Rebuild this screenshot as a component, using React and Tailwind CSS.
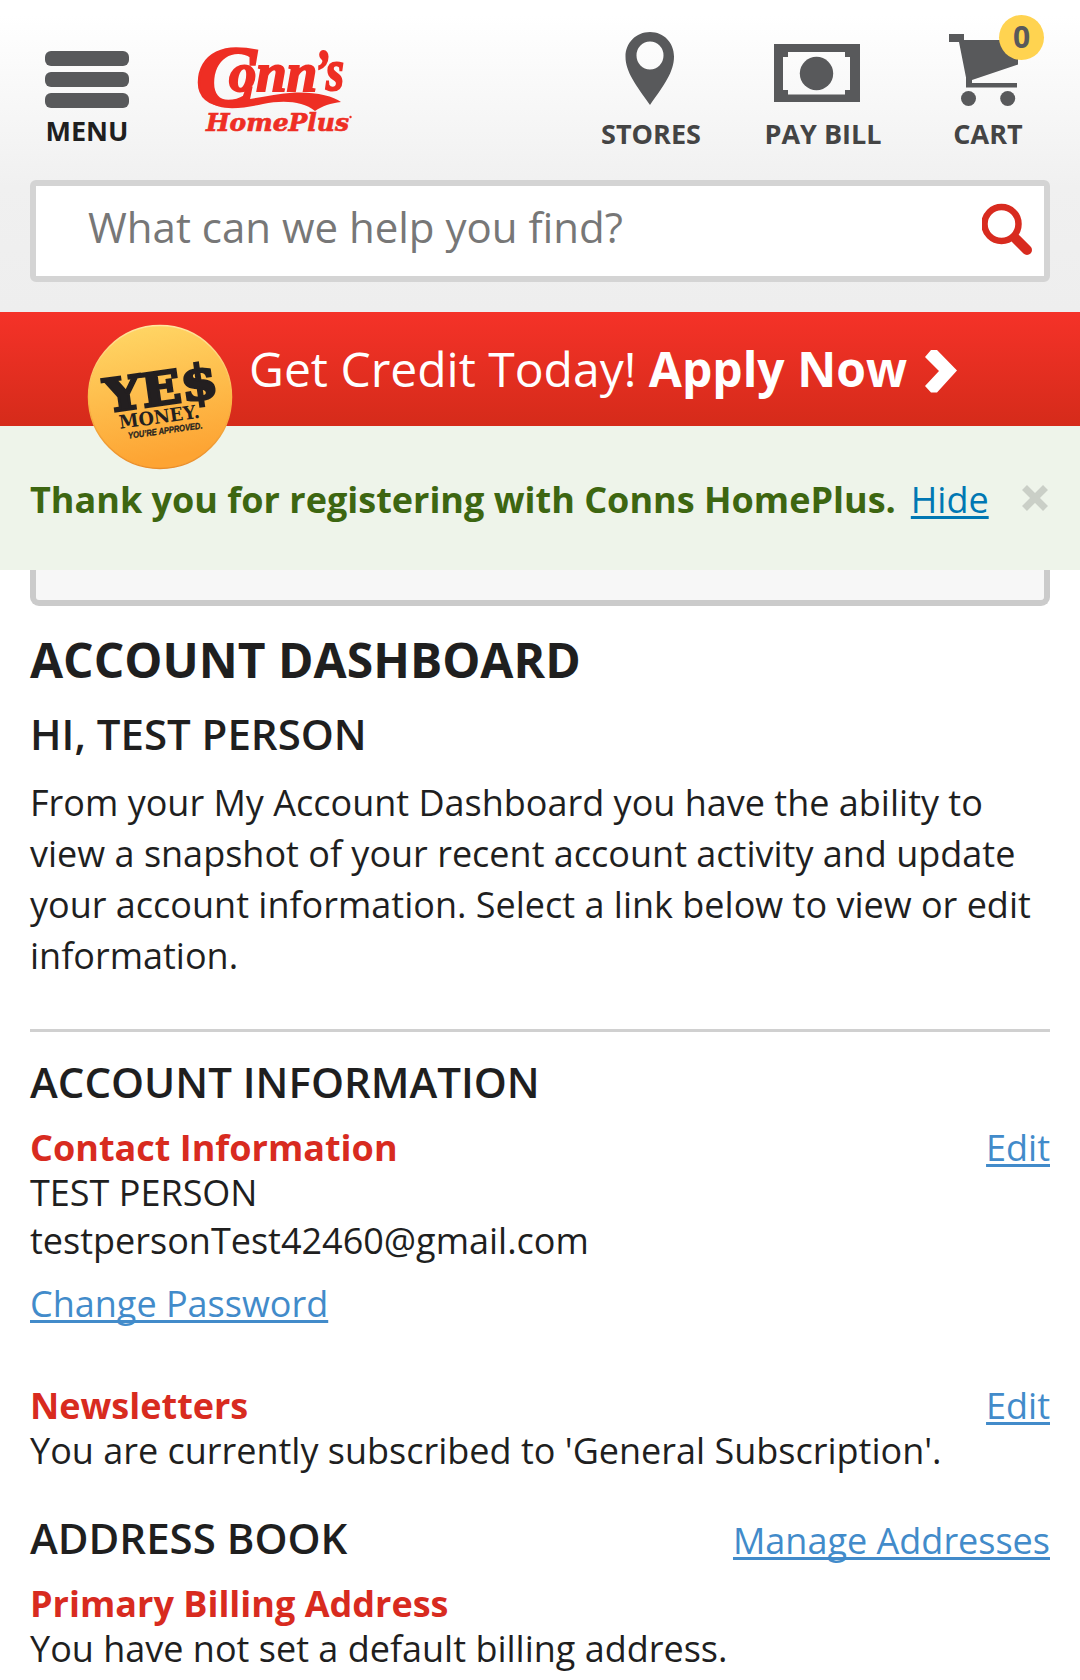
const Pin = () => (
  <svg className="block h-[74px] w-[50px]" viewBox="0 0 50 74" fill="#58595b">
    <path fillRule="evenodd" d="M25 0C11 0 .5 11 .5 24.500C.5 40 11 53 25 73C39 53 49 40 49 24.500C49 11 39 0 25 0ZM25 9.500A13.500 14 0 1 1 25 37.500A13.500 14 0 1 1 25 9.500Z" />
  </svg>
);

const Bill = () => (
  <svg className="block h-[58px] w-[86px]" viewBox="0 0 86 58" fill="#58595b">
    <path fillRule="evenodd" d="M0 0H86V58H0ZM14 8V13H9V46H14V50.500H71V46H76V13H71V8Z" />
    <circle cx="42.500" cy="29.500" r="16.700" />
  </svg>
);

const Cart = () => (
  <svg className="block h-[73px] w-[70px]" viewBox="0 0 70 73" fill="#58595b">
    <path fillRule="evenodd" d="M0 0H15V6H69V30.500L23 46V49H68V53.500H17V43.500L10 8H0Z" />
    <circle cx="19.500" cy="64.500" r="7.500" />
    <circle cx="58.700" cy="64.500" r="7.500" />
  </svg>
);

const Logo = () => (
  <svg className="block h-[90px] w-[160px] overflow-visible" viewBox="0 0 160 90" fill="#ee2e24">
    <g fontFamily="Liberation Serif" fontWeight="700" fontStyle="italic" stroke="#ee2e24">
      <text x="-1" y="60" fontSize="85" textLength="60" lengthAdjust="spacingAndGlyphs" strokeWidth="2.500">C</text>
      <text x="32" y="46" fontSize="54" textLength="88" lengthAdjust="spacingAndGlyphs" strokeWidth="2">onn</text>
      <text x="117" y="45" fontSize="60" textLength="30" lengthAdjust="spacingAndGlyphs" strokeWidth="2">’s</text>
    </g>
    <path d="M12 50C28 64 60 50 98 47.500C120 47 136 51 144 57C134 58 125 61 118 66C106 56 86 55 66 59C48 63 22 67 12 56Z" />
    <text x="9" y="85.500" fontFamily="DejaVu Serif" fontWeight="700" fontStyle="italic" fontSize="25" textLength="143" lengthAdjust="spacingAndGlyphs" stroke="#ee2e24" strokeWidth="0.700">HomePlus</text>
    <circle cx="153.500" cy="72" r="1.200" />
  </svg>
);

const YesMoney = () => (
  <svg className="absolute left-[87px] top-[12px] size-[146px]" viewBox="0 0 146 146">
    <defs>
      <linearGradient id="gold" x1="0" y1="0" x2="0.200" y2="1">
        <stop offset="0" stopColor="#ffd968" />
        <stop offset="1" stopColor="#fda433" />
      </linearGradient>
      <linearGradient id="rim" x1="0" y1="0" x2="0" y2="1">
        <stop offset="0" stopColor="#ffe6a0" />
        <stop offset="0.500" stopColor="#fbb947" />
        <stop offset="1" stopColor="#ea8d2a" />
      </linearGradient>
    </defs>
    <circle cx="73" cy="73" r="71.500" fill="url(#gold)" stroke="url(#rim)" strokeWidth="1.500" />
    <g fill="#231f20" fontWeight="700" transform="rotate(-8 73 73)">
      <text x="18" y="81" fontFamily="DejaVu Serif" fontSize="46" textLength="77" lengthAdjust="spacingAndGlyphs" stroke="#231f20" strokeWidth="2.500">YE</text>
      <text x="95" y="81" fontFamily="DejaVu Serif" fontSize="48" textLength="37" lengthAdjust="spacingAndGlyphs" stroke="#231f20" strokeWidth="2.500">$</text>
      <text x="29" y="99" fontFamily="DejaVu Serif" fontSize="18.500" textLength="81" lengthAdjust="spacingAndGlyphs">MONEY.</text>
      <text x="36" y="110" fontFamily="Liberation Sans" fontStyle="italic" fontSize="9" textLength="75" lengthAdjust="spacingAndGlyphs" stroke="#231f20" strokeWidth="0.300">YOU’RE APPROVED.</text>
    </g>
  </svg>
);

const Link = ({ children }) => (
  <a className="text-[#428bca] underline decoration-[3px] underline-offset-[3px] [text-decoration-skip-ink:none]">{children}</a>
);

export default function App() {
  return (
    <div className="h-[1680px] w-[1080px] overflow-hidden bg-white font-['Open_Sans',sans-serif] text-[36px] leading-[48px] text-[#1f1f1f]">
      <header className="h-[312px] bg-linear-to-b from-white from-5% via-[#f0f0f0] via-60% to-[#eeeeee] px-[30px]">
        <div className="flex h-[180px] text-[27px] leading-[30px] font-bold text-[#444]">
          <div className="flex w-[114px] flex-col items-center pt-[51px] text-[#1f1f1f]">
            <div className="flex flex-col gap-[6px]">
              <span className="h-[15px] w-[84px] rounded-[6px] bg-[#58595b]" />
              <span className="h-[15px] w-[84px] rounded-[6px] bg-[#58595b]" />
              <span className="h-[15px] w-[84px] rounded-[6px] bg-[#58595b]" />
            </div>
            <span className="mt-[8px]">MENU</span>
          </div>
          <div className="ml-[53px] pt-[45px]"><Logo /></div>
          <nav className="ml-auto flex">
            <div className="flex w-[120px] flex-col items-center pt-[32px]">
              <div className="-ml-[2px]"><Pin /></div>
              <span className="mt-[13px]">STORES</span>
            </div>
            <div className="ml-[44px] flex w-[136px] flex-col items-center pt-[44px]">
              <div className="-ml-3"><Bill /></div>
              <span className="mt-[17px]">PAY BILL</span>
            </div>
            <div className="relative mr-[2px] ml-[37px] flex w-[120px] flex-col items-center pt-[34px]">
              <div className="-ml-[8px]"><Cart /></div>
              <span className="mt-[12px]">CART</span>
              <span className="absolute left-[71px] top-[15px] flex size-[45px] items-center justify-center rounded-full bg-[#ffd350] pb-px text-[30px] text-[#58595b]">0</span>
            </div>
          </nav>
        </div>
        <div className="flex h-[102px] items-center justify-between rounded-[6px] border-[6px] border-[#d4d4d4] bg-white pl-[52px] pr-[11px]">
          <span className="-mt-2 text-[42px] leading-[60px] text-[#777]">What can we help you find?</span>
          <svg className="-mt-[3px] h-[53px] w-[51px]" viewBox="0 0 51 53" fill="none" stroke="#d82b1f">
            <circle cx="19.500" cy="21" r="17" strokeWidth="6.500" />
            <path d="M34 36L45 47" strokeWidth="10" strokeLinecap="round" />
          </svg>
        </div>
      </header>

      <div className="relative flex h-[114px] items-center bg-linear-to-b from-[#f53228] to-[#d52b1a] pl-[249px] text-[48px] text-white">
        <YesMoney />
        <span className="whitespace-pre">Get Credit Today! <b>Apply Now</b></span>
        <svg className="ml-[17px] mt-[4px] h-[43px] w-[34px]" viewBox="0 0 34 43" fill="#fff">
          <path d="M7 0H13L33 20.500L13 42.500H7L1 36L15 21L1 7Z" />
        </svg>
      </div>

      <div className="flex h-[144px] items-center bg-[#eef4ea] px-[30px]">
        <b className="pt-[4px] text-[#3d6611]">Thank you for registering with Conns HomePlus.</b>
        <a className="ml-[15px] pt-[4px] text-[#0077b3] underline decoration-[3px] underline-offset-[3px]">Hide</a>
        <svg className="ml-auto mr-[2px] size-[26px]" viewBox="0 0 26 26" stroke="#cacfc7" strokeWidth="7">
          <path d="M2.500 2.500L23.500 23.500M23.500 2.500L2.500 23.500" />
        </svg>
      </div>

      <main className="px-[30px]">
        <div className="h-[36px] rounded-b-[9px] border-[6px] border-t-0 border-[#cbcbcb] bg-[#f7f7f7]" />
        <h1 className="mt-[28px] text-[48px] leading-[52px] font-bold">ACCOUNT DASHBOARD</h1>
        <h2 className="mt-[25px] text-[42px] leading-[46px] font-semibold">HI, TEST PERSON</h2>
        <p className="mt-[20px] leading-[51px]">
          From your My Account Dashboard you have the ability to view a snapshot of your recent account activity and update your account information. Select a link below to view or edit information.
        </p>
        <hr className="mt-[48px] border-t-[3px] border-[#d0d0d0]" />
        <h2 className="mt-[27px] text-[42px] leading-[46px] font-semibold">ACCOUNT INFORMATION</h2>
        <div className="mt-[19px] flex justify-between">
          <b className="text-[#d82b1f]">Contact Information</b>
          <Link>Edit</Link>
        </div>
        <p className="-mt-[3px]">TEST PERSON</p>
        <p>testpersonTest42460@gmail.com</p>
        <p className="mt-[15px]"><Link>Change Password</Link></p>
        <div className="mt-[54px] flex justify-between">
          <b className="text-[#d82b1f]">Newsletters</b>
          <Link>Edit</Link>
        </div>
        <p className="-mt-[3px]">You are currently subscribed to 'General Subscription'.</p>
        <div className="mt-[40px] flex items-baseline justify-between">
          <h2 className="text-[42px] leading-[46px] font-semibold">ADDRESS BOOK</h2>
          <Link>Manage Addresses</Link>
        </div>
        <b className="mt-[15px] block text-[#d82b1f]">Primary Billing Address</b>
        <p className="-mt-[3px]">You have not set a default billing address.</p>
      </main>
    </div>
  );
}
